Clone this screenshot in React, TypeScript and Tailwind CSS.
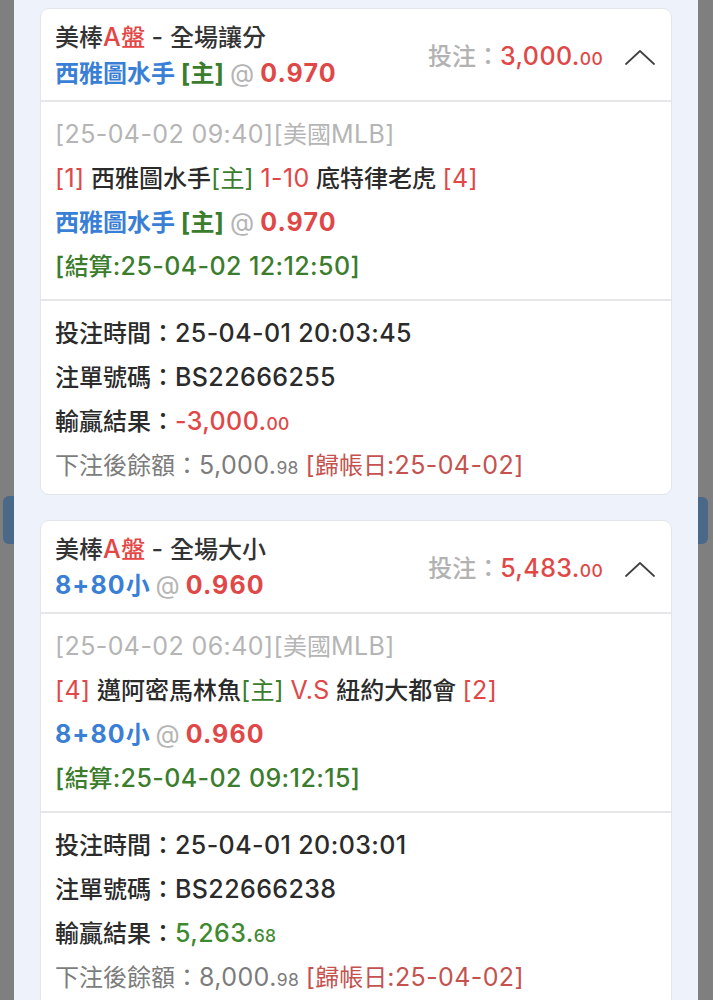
import React from "react";

const FONT = { fontFamily: 'Inter, "Noto Sans CJK TC", "Noto Sans", sans-serif' };

const CJK = /[\u3000-\u9fff\uff00-\uffef]/;

function T({ s, bold }: { s: string; bold?: boolean }) {
  const parts = s.split(/([\u3000-\u9fff\uff00-\uffef]+)/);
  return (
    <>
      {parts.map((p, i) =>
        p === "" ? null : CJK.test(p) ? (
          <React.Fragment key={i}>{p}</React.Fragment>
        ) : bold ? (
          <span key={i} className="text-[25px] leading-none tracking-[1.1px]">
            {p}
          </span>
        ) : (
          <span key={i} className="text-[25px] leading-none tracking-[0.4px]">
            {p}
          </span>
        )
      )}
    </>
  );
}

function Money({ whole, dec, cls }: { whole: string; dec: string; cls: string }) {
  return (
    <span className={cls}>
      <span className="text-[25px] leading-none tracking-[0.4px]">{whole}</span>
      <span className="text-[17.5px] leading-none tracking-[0.3px]">{dec}</span>
    </span>
  );
}

function Chevron() {
  return (
    <svg width="30" height="15" viewBox="0 0 30 15" fill="none" className="shrink-0">
      <polyline points="1,14 15,1 29,14" stroke="#444" strokeWidth="1.8" strokeLinecap="round" strokeLinejoin="round" />
    </svg>
  );
}

type Bet = {
  market: string;
  pickMain: React.ReactNode;
  stake: [string, string];
  info: string;
  matchLine: React.ReactNode;
  settle: string;
  time: string;
  no: string;
  result: [string, string];
  resultCls: string;
  balance: [string, string];
  ledger: string;
};

function Card({ b }: { b: Bet }) {
  return (
    <div className="shrink-0 bg-white border border-[#e2e5ea] rounded-[9px] overflow-hidden">
      <div className="flex items-center justify-between pl-[14px] pr-[16px] pt-[11px] pb-[8px] border-b-2 border-[#e6e6e8]">
        <div className="leading-[36px]">
          <div className="text-[#333] font-medium">
            美棒<span className="text-[#e54545]"><T s="A" />盤</span> <T s="-" /> {b.market}
          </div>
          <div className="font-bold">{b.pickMain}</div>
        </div>
        <div className="flex items-center gap-[22px] pt-[2px]">
          <div className="font-medium">
            <span className="text-[#b2b2b2]">投注：</span>
            <Money whole={b.stake[0]} dec={b.stake[1]} cls="text-[#e04848]" />
          </div>
          <Chevron />
        </div>
      </div>
      <div className="px-[14px] pt-[11px] pb-[10px] leading-[44px] border-b-2 border-[#e6e6e8]">
        <div className="text-[#b5b5b5]"><T s={b.info} /></div>
        <div className="text-[#2b2b2b] font-medium">{b.matchLine}</div>
        <div className="font-bold">{b.pickMain}</div>
        <div className="text-[#3b7d2c] font-medium"><T s={b.settle} /></div>
      </div>
      <div className="px-[14px] pt-[11px] pb-[6px] leading-[44px] font-medium text-[#2b2b2b]">
        <div>投注時間：<T s={b.time} /></div>
        <div>注單號碼：<T s={b.no} /></div>
        <div>
          輸贏結果：<Money whole={b.result[0]} dec={b.result[1]} cls={b.resultCls} />
        </div>
        <div className="text-[#7c7c7c] font-normal">
          下注後餘額：<Money whole={b.balance[0]} dec={b.balance[1]} cls="" />{" "}
          <span className="text-[#c4524f]"><T s={b.ledger} /></span>
        </div>
      </div>
    </div>
  );
}

const blue = "text-[#3a7fd6]";
const green = "text-[#3b7d2c]";
const red = "text-[#e04848]";
const gray = "text-[#b5b5b5] font-normal";

const bets: Bet[] = [
  {
    market: "全場讓分",
    pickMain: (
      <>
        <span className={blue}>西雅圖水手</span> <span className={green}><T s="[" />主<T s="]" /></span>{" "}
        <span className={gray}><T s="@" /></span> <span className={red}><T s="0.970" bold /></span>
      </>
    ),
    stake: ["3,000.", "00"],
    info: "[25-04-02 09:40][美國MLB]",
    matchLine: (
      <>
        <span className="text-[#e04848] font-normal"><T s="[1]" /></span> 西雅圖水手
        <span className="text-[#3b7d2c] font-normal"><T s="[" />主<T s="]" /></span>{" "}
        <span className="text-[#e04848] font-normal"><T s="1-10" /></span> 底特律老虎{" "}
        <span className="text-[#e04848] font-normal"><T s="[4]" /></span>
      </>
    ),
    settle: "[結算:25-04-02 12:12:50]",
    time: "25-04-01 20:03:45",
    no: "BS22666255",
    result: ["-3,000.", "00"],
    resultCls: "text-[#e04848]",
    balance: ["5,000.", "98"],
    ledger: "[歸帳日:25-04-02]",
  },
  {
    market: "全場大小",
    pickMain: (
      <>
        <span className={blue}><T s="8+80" bold />小</span> <span className={gray}><T s="@" /></span>{" "}
        <span className={red}><T s="0.960" bold /></span>
      </>
    ),
    stake: ["5,483.", "00"],
    info: "[25-04-02 06:40][美國MLB]",
    matchLine: (
      <>
        <span className="text-[#e04848] font-normal"><T s="[4]" /></span> 邁阿密馬林魚
        <span className="text-[#3b7d2c] font-normal"><T s="[" />主<T s="]" /></span>{" "}
        <span className="text-[#e04848] font-normal"><T s="V.S" /></span> 紐約大都會{" "}
        <span className="text-[#e04848] font-normal"><T s="[2]" /></span>
      </>
    ),
    settle: "[結算:25-04-02 09:12:15]",
    time: "25-04-01 20:03:01",
    no: "BS22666238",
    result: ["5,263.", "68"],
    resultCls: "text-[#3f8a2e]",
    balance: ["8,000.", "98"],
    ledger: "[歸帳日:25-04-02]",
  },
];

export default function App() {
  return (
    <div className="relative h-[1000px] w-full overflow-hidden bg-[#7f7f7f] text-[24px]" style={FONT}>
      <div className="absolute left-[3px] top-[496px] h-[48px] w-[14px] rounded-l-[6px] bg-[#4a6888]" />
      <div className="absolute left-[694px] top-[497px] h-[47px] w-[14px] rounded-r-[6px] bg-[#4a6888]" />
      <div className="relative mx-[14px] mr-[15px] h-full bg-[#eef3fb] px-[26px] pt-[8px] flex flex-col gap-[25px]">
        {bets.map((b, i) => (
          <Card key={i} b={b} />
        ))}
      </div>
    </div>
  );
}
